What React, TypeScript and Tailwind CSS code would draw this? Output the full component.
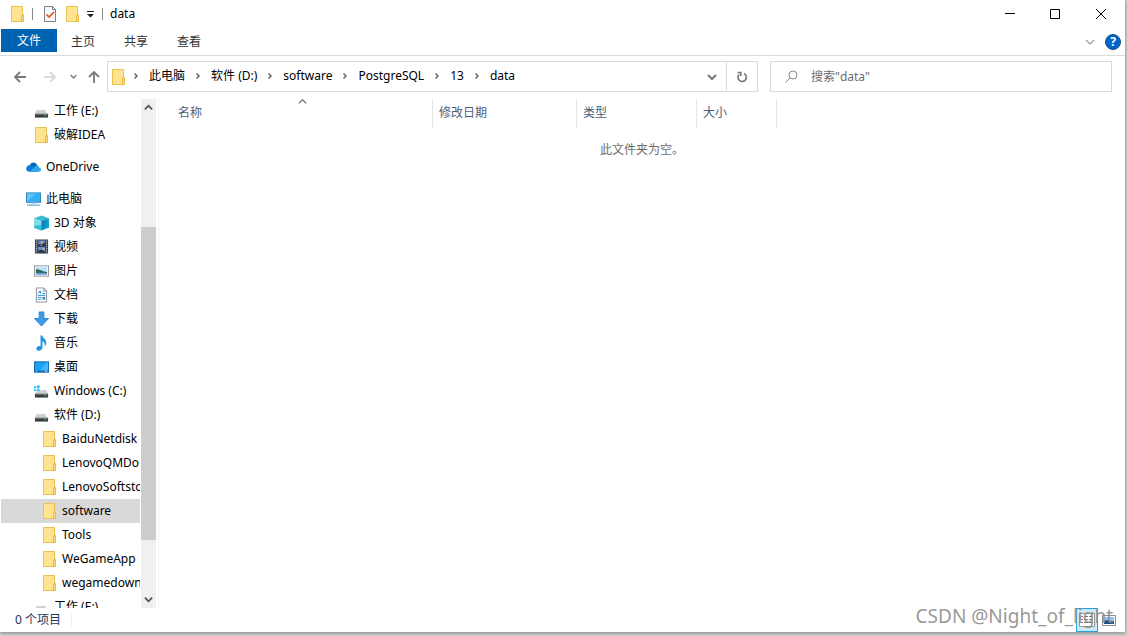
import React, { useState } from "react";

type IconProps = { className?: string };

const FolderIcon = ({ className = "" }: IconProps) => (
  <svg width="14" height="16" viewBox="0 0 14 16" className={`shrink-0 ${className}`} aria-hidden="true">
    <path d="M.5.5h11v15H.5z" fill="#ffe391" stroke="#e8c352" />
    <path d="M10.500 9.500l2-1v7h-2z" fill="#fbdc7c" stroke="#e6bd43" />
  </svg>
);

const DriveIcon = () => (
  <svg width="16" height="16" viewBox="0 0 16 16" aria-hidden="true">
    <path d="M3 7h9l2 4H1z" fill="#cfd2d4" />
    <rect x="1" y="11" width="14" height="4" fill="#3c3f42" />
    <rect x="1" y="11" width="14" height="1" fill="#74787b" />
    <rect x="11" y="12" width="2" height="1" fill="#3fe04f" />
  </svg>
);

const SystemDriveIcon = () => (
  <svg width="16" height="16" viewBox="0 0 16 16" aria-hidden="true">
    <path d="M7 7h6l2 4H1l2-3h4z" fill="#cfd2d4" />
    <rect x="1" y="11" width="14" height="4" fill="#3c3f42" />
    <rect x="1" y="11" width="14" height="1" fill="#74787b" />
    <rect x="11" y="12" width="2" height="1" fill="#3fe04f" />
    <path d="M0 3h2v2H0zM3 2h3v3H3zM0 6h2v2H0zM3 6h3v2H3z" fill="#15bdf2" />
  </svg>
);

const OneDriveIcon = () => (
  <svg width="16" height="16" viewBox="0 0 16 16" aria-hidden="true">
    <path d="M4 6.500C5 2.500 10 2 12 6l-3 3-7 2z" fill="#0364b8" />
    <path d="M3.500 6.200c2-.6 3.500 0 4.500.8l6 4.200c-.5 1.500-2 1.800-3 1.800H3C-1 12.500-.5 6.500 3.500 6.200z" fill="#0f78d4" />
    <path d="M9 8c2-3 5-2 5 .7 3 .3 2.500 4.300-.5 4.300H4z" fill="#28a8ea" />
  </svg>
);

const ComputerIcon = () => (
  <svg width="16" height="16" viewBox="0 0 16 16" aria-hidden="true">
    <rect x=".5" y="1.500" width="15" height="10" fill="#62c8fb" stroke="#2a7fb5" />
    <path d="M1 11l9-9h5v9z" fill="#35aef2" />
    <path d="M6 12h4v1H6z" fill="#9cc5dd" />
    <path d="M1 14h14v1H1z" fill="#3f8fc2" />
  </svg>
);

const CubeIcon = () => (
  <svg width="16" height="16" viewBox="0 0 16 16" aria-hidden="true">
    <path d="M0 3l8-3 8 3-8 3z" fill="#3db9cc" />
    <path d="M0 3l8 3v10l-8-3z" fill="#7fdcea" />
    <path d="M0 11l8-1v6l-8-3z" fill="#35bcd6" />
    <path d="M8 6l8-3v10l-8 3z" fill="#129fd0" />
    <path d="M8 6l5-2v7l-5 5z" fill="#0a86c0" />
  </svg>
);

const VideoIcon = () => (
  <svg width="16" height="16" viewBox="0 0 16 16" aria-hidden="true">
    <rect x="1" y="0" width="14" height="15" fill="#3d3d3d" />
    <rect x="4" y="1" width="8" height="6" fill="#4f82e0" />
    <rect x="4" y="8" width="8" height="6" fill="#5b92e6" />
    <path d="M4 5h3v2H4zM9 4h3v3H9zM4 12l4-1 4 2v1H4z" fill="#26343c" />
    <path d="M7 2h3v2H7zM9 9h2v2H9z" fill="#e8c23c" />
    <path d="M5 4h2v1H5zM7 10h2v1H7z" fill="#d65a34" />
    <path d="M2.500 1v14M13.500 1v14" stroke="#e6e6e6" strokeDasharray="1 1" />
  </svg>
);

const PictureIcon = () => (
  <svg width="16" height="16" viewBox="0 0 16 16" aria-hidden="true">
    <rect x=".5" y="2.500" width="15" height="11" fill="#fff" stroke="#929292" />
    <rect x="2" y="4" width="12" height="8" fill="#b8e0f7" />
    <path d="M2 6c4 0 6 2 12 3v1H2z" fill="#2f665c" />
    <path d="M2 10h12v2H2z" fill="#6fa3cc" />
  </svg>
);

const DocumentIcon = () => (
  <svg width="16" height="16" viewBox="0 0 16 16" aria-hidden="true">
    <path d="M2.500.5h8l3 3v12h-11z" fill="#fff" stroke="#8b8f93" />
    <path d="M10.500.5v3h3" fill="none" stroke="#8b8f93" />
    <path d="M4.500 6.500l2-3 .5 3M9 4.500h1M9 6.500h3" fill="none" stroke="#1680c5" />
    <path d="M4 8.500h8M4 10.500h4M4 12.500h4" stroke="#2f92d6" />
    <path d="M9 10h3v3H9z" fill="#3d8bb0" />
  </svg>
);

const DownloadIcon = () => (
  <svg width="16" height="16" viewBox="0 0 16 16" aria-hidden="true">
    <path d="M5.500.5h5v7h5L8 15.500.5 7.500h5z" fill="#3c9be8" stroke="#2785d2" />
  </svg>
);

const MusicIcon = () => (
  <svg width="16" height="16" viewBox="0 0 16 16" aria-hidden="true">
    <path d="M7 0h2c0 3 5 4 4 9-.3 1-.8 2-1.500 2.500C12 8 10.500 6.500 9 6v7c-.5 4-7 4-6.500 1C3 11.500 5.500 11 7 11.500z" fill="#1795e8" />
  </svg>
);

const DesktopIcon = () => (
  <svg width="16" height="16" viewBox="0 0 16 16" aria-hidden="true">
    <rect x=".5" y="2.500" width="15" height="11" fill="#1ba1f5" stroke="#0c67a8" />
    <path d="M6 12l8-9h1v9z" fill="#45b6fa" />
    <path d="M1 12.500h14" stroke="#075a9c" />
    <path d="M2 12.500h1M12 12.500h2" stroke="#fff" />
  </svg>
);

const Chevron = ({ d, className = "", size = 10, width = 1.5 }: IconProps & { d: string; size?: number; width?: number }) => (
  <svg width={size} height={size} viewBox="0 0 10 10" fill="none" stroke="currentColor" strokeWidth={width} className={`shrink-0 ${className}`} aria-hidden="true">
    <path d={d} />
  </svg>
);
const RIGHT = "M3.500 2.500L6 5 3.500 7.500";
const DOWN = "M1 3l4 4 4-4";
const UP = "M1 7l4-4 4 4";

const CheckDocIcon = () => (
  <svg width="14" height="16" viewBox="0 0 14 16" aria-hidden="true">
    <path d="M1.500.5h8l3 3v12h-11z" fill="#f7f8fa" stroke="#7e8286" />
    <path d="M9.500.5v3h3" fill="none" stroke="#7e8286" />
    <path d="M3.500 8.500l2.500 2.500 5-5" fill="none" stroke="#e8561c" strokeWidth="1.700" />
  </svg>
);

const MoreIcon = () => (
  <svg width="7" height="8" viewBox="0 0 7 8" aria-hidden="true">
    <path d="M0 1.500h7" stroke="#222" />
    <path d="M0 4h7L3.500 7.500z" fill="#222" />
  </svg>
);

type Item = { label: string; icon: React.ReactNode; level: 0 | 1 | 2; gap?: boolean };

const items: Item[] = [
  { label: "工作 (E:)", icon: <DriveIcon />, level: 1 },
  { label: "破解IDEA", icon: <FolderIcon />, level: 1 },
  { label: "OneDrive", icon: <OneDriveIcon />, level: 0, gap: true },
  { label: "此电脑", icon: <ComputerIcon />, level: 0, gap: true },
  { label: "3D 对象", icon: <CubeIcon />, level: 1 },
  { label: "视频", icon: <VideoIcon />, level: 1 },
  { label: "图片", icon: <PictureIcon />, level: 1 },
  { label: "文档", icon: <DocumentIcon />, level: 1 },
  { label: "下载", icon: <DownloadIcon />, level: 1 },
  { label: "音乐", icon: <MusicIcon />, level: 1 },
  { label: "桌面", icon: <DesktopIcon />, level: 1 },
  { label: "Windows (C:)", icon: <SystemDriveIcon />, level: 1 },
  { label: "软件 (D:)", icon: <DriveIcon />, level: 1 },
  { label: "BaiduNetdisk", icon: <FolderIcon />, level: 2 },
  { label: "LenovoQMDo", icon: <FolderIcon />, level: 2 },
  { label: "LenovoSoftsto", icon: <FolderIcon />, level: 2 },
  { label: "software", icon: <FolderIcon />, level: 2 },
  { label: "Tools", icon: <FolderIcon />, level: 2 },
  { label: "WeGameApp", icon: <FolderIcon />, level: 2 },
  { label: "wegamedown", icon: <FolderIcon />, level: 2 },
  { label: "工作 (E:)", icon: <DriveIcon />, level: 1 },
];

const indent = { 0: "pl-6", 1: "pl-8", 2: "pl-10" };
const crumbs = ["此电脑", "软件 (D:)", "software", "PostgreSQL", "13", "data"];

function TitleBar() {
  return (
    <header className="flex h-7 shrink-0 items-center pl-[11px]">
      <FolderIcon />
      <span className="ml-[7px] h-3 w-px bg-[#8a8a8a]" />
      <button aria-label="属性" className="ml-2.5"><CheckDocIcon /></button>
      <button aria-label="新建文件夹" className="ml-[9px]"><FolderIcon /></button>
      <button aria-label="自定义快速访问工具栏" className="ml-[7px]"><MoreIcon /></button>
      <span className="ml-2 h-3 w-px bg-[#8a8a8a]" />
      <h1 className="ml-[7px] text-xs">data</h1>
      <div className="ml-auto flex items-center pr-px">
        <button aria-label="最小化" className="flex h-7 w-[45px] items-center justify-center">
          <svg width="10" height="10" viewBox="0 0 10 10"><path d="M0 4.500h10" stroke="#000" /></svg>
        </button>
        <button aria-label="最大化" className="flex h-7 w-[46px] items-center justify-center">
          <svg width="10" height="10" viewBox="0 0 10 10"><path d="M.5.5h9v9h-9z" fill="none" stroke="#000" /></svg>
        </button>
        <button aria-label="关闭" className="flex h-7 w-[46px] items-center justify-center">
          <svg width="10" height="10" viewBox="0 0 10 10"><path d="M0 0l10 10M10 0L0 10" stroke="#000" /></svg>
        </button>
      </div>
    </header>
  );
}

function Ribbon() {
  return (
    <nav className="flex h-7 shrink-0 items-start border-b border-[#dadbdc] pt-px text-xs text-[#333]">
      <button className="ml-px h-[23px] w-14 bg-[#0063b1] text-white">文件</button>
      {["主页", "共享", "查看"].map((tab) => (
        <button key={tab} className="h-[25px] w-[53px] pr-px">{tab}</button>
      ))}
      <div className="ml-auto flex h-[26px] items-center gap-2.5 pr-1">
        <button aria-label="展开功能区" className="text-[#999]"><Chevron d={DOWN} width={1.2} /></button>
        <button aria-label="帮助" className="flex size-4 items-center justify-center rounded-full border border-[#174f8c] bg-[#0067c8] text-xs font-bold leading-none text-white">?</button>
      </div>
    </nav>
  );
}

function AddressRow() {
  const [query, setQuery] = useState("");
  return (
    <div className="flex shrink-0 items-center pt-[5px] pr-[13px] text-xs">
      <div className="flex w-[107px] shrink-0 items-center pl-3 text-[#7a7a7a]">
        <button aria-label="后退">
          <svg width="16" height="14" viewBox="0 0 16 14" fill="none" stroke="currentColor" strokeWidth="1.800"><path d="M14 7H3M8 2L3 7l5 5" /></svg>
        </button>
        <button aria-label="前进" className="ml-3.5 text-[#d9d9d9]">
          <svg width="16" height="14" viewBox="0 0 16 14" fill="none" stroke="currentColor" strokeWidth="1.800"><path d="M2 7h11M8 2l5 5-5 5" /></svg>
        </button>
        <button aria-label="最近浏览的位置" className="ml-3"><Chevron d={DOWN} size={7} width={2} /></button>
        <button aria-label="上移" className="ml-2.5">
          <svg width="14" height="14" viewBox="0 0 14 14" fill="none" stroke="currentColor" strokeWidth="1.800"><path d="M7 13V2M2 7l5-5 5 5" /></svg>
        </button>
      </div>
      <div className="flex h-[31px] grow-[645] basis-0 items-center border border-[#d9d9d9] pl-1">
        <FolderIcon />
        <ol className="-ml-[3px] flex grow items-center pb-px">
          {crumbs.map((c) => (
            <li key={c} className="flex items-center">
              <Chevron d={RIGHT} className="mx-2 text-[#666]" />
              <a href="#" className="whitespace-nowrap">{c}</a>
            </li>
          ))}
        </ol>
        <button aria-label="以前的位置" className="px-[9px] text-[#7a7a7a]"><Chevron d={DOWN} width={2} /></button>
        <button aria-label="刷新" className="flex h-full w-[31px] items-center justify-center border-l border-[#d9d9d9] text-[#7a7a7a]">
          <svg width="12" height="12" viewBox="0 0 12 12" fill="none" stroke="currentColor" strokeWidth="1.700">
            <path d="M8 2.500A4.200 4.200 0 1 1 3 3.500M1.500 1.500h3.300v3.500" />
          </svg>
        </button>
      </div>
      <label className="ml-3 flex h-[31px] grow-[326] basis-0 items-center border border-[#d9d9d9] pl-3.5 text-[#777]">
        <svg width="13" height="13" viewBox="0 0 13 13" fill="none" stroke="#888" aria-hidden="true">
          <circle cx="8" cy="5" r="4" /><path d="M5 8L.5 12.500" />
        </svg>
        <input aria-label="搜索" value={query} onChange={(e) => setQuery(e.target.value)} placeholder={'搜索"data"'} className="ml-[13px] w-0 min-w-0 grow outline-none placeholder:text-[#6d6d6d]" />
      </label>
    </div>
  );
}

function Sidebar() {
  const [selected, setSelected] = useState(16);
  return (
    <aside className="flex w-[159px] shrink-0 border-r border-[#f3f3f3] pr-0.5">
      <ul className="min-w-0 grow overflow-hidden pl-px text-xs">
        {items.map((item, i) => (
          <li key={i} className={item.gap ? "pt-2" : ""}>
            <button
              onClick={() => setSelected(i)}
              className={`flex h-6 w-full items-center gap-[5px] overflow-hidden whitespace-nowrap ${indent[item.level]} ${i === selected ? "bg-[#d9d9d9]" : ""}`}
            >
              <span className="flex w-4 shrink-0 items-center justify-center pl-px">{item.icon}</span>
              {item.label}
            </button>
          </li>
        ))}
      </ul>
      <div className="ml-px flex w-[15px] shrink-0 flex-col bg-[#f0f0f0] text-[#505050]">
        <button aria-label="向上滚动" className="flex h-[17px] items-center justify-center"><Chevron d={UP} size={9} width={2} /></button>
        <div className="flex grow flex-col">
          <div className="grow-[111] basis-0" />
          <div className="grow-[313] basis-0 bg-[#cdcdcd]" />
          <div className="grow-[51] basis-0" />
        </div>
        <button aria-label="向下滚动" className="flex h-[17px] items-center justify-center"><Chevron d={DOWN} size={9} width={2} /></button>
      </div>
    </aside>
  );
}

function FileList() {
  return (
    <main className="grow pl-3 text-xs">
      <table className="table-fixed border-separate border-spacing-0 text-left text-[#4c607a]">
        <thead>
          <tr className="h-7">
            <th className="relative w-[262px] border-r border-[#e5e5e5] pl-[7px] font-normal">
              名称
              <Chevron d={UP} size={9} width={1.2} className="absolute -top-0.5 left-[127px] text-[#555]" />
            </th>
            <th className="w-36 border-r border-[#e5e5e5] pl-1.5 font-normal">修改日期</th>
            <th className="w-[120px] border-r border-[#e5e5e5] pl-1.5 font-normal">类型</th>
            <th className="w-20 border-r border-[#e5e5e5] pl-1.5 font-normal">大小</th>
          </tr>
        </thead>
      </table>
      <p className="mt-[13px] pr-3 text-center leading-5 text-[#6d6d6d]">此文件夹为空。</p>
    </main>
  );
}

function StatusBar() {
  return (
    <footer className="relative flex h-6 shrink-0 items-center pr-[9px] pl-[15px] text-xs text-[#1e395b]">
      <span>0 个项目</span>
      <span className="ml-2.5 h-3 w-px bg-[#ededed]" />
      <button aria-label="详细信息" className="ml-auto flex h-6 w-[22px] items-center justify-center border border-[#26a0da] bg-[#cce8f6]">
        <svg width="16" height="14" viewBox="0 0 16 14">
          <path d="M.5.5h15v13H.5z" fill="#fff" stroke="#999" />
          <path d="M2 3.500h2M2 6.500h2M2 9.500h2" stroke="#d07356" />
          <path d="M5 3.500h4M10 3.500h4M5 6.500h4M10 6.500h4M5 9.500h4M10 9.500h4" stroke="#777" />
        </svg>
      </button>
      <button aria-label="大缩略图" className="ml-1">
        <svg width="14" height="11" viewBox="0 0 14 11">
          <path d="M.5.5h13v10H.5z" fill="#fff" stroke="#8c8c8c" />
          <path d="M2 2h10v7H2z" fill="#8fc4ee" />
          <path d="M2 6c4-2 6 1 10 0v3H2z" fill="#1d4f8d" />
        </svg>
      </button>
      <span className="pointer-events-none absolute right-3 bottom-1 text-[19px] leading-6 whitespace-nowrap text-[#8b8b8b]/90">CSDN @Night_of_light</span>
    </footer>
  );
}

export default function App() {
  return (
    <div className="flex h-screen flex-col bg-[#d2d2d2] pr-0.5 pb-1 font-['Noto_Sans','Noto_Sans_CJK_SC',sans-serif] text-black">
      <div className="flex min-h-0 grow flex-col bg-white shadow-[0_1px_4px_rgba(0,0,0,0.4)]">
        <TitleBar />
        <Ribbon />
        <AddressRow />
        <div className="flex min-h-0 grow pt-[7px]">
          <Sidebar />
          <FileList />
        </div>
        <StatusBar />
      </div>
    </div>
  );
}
